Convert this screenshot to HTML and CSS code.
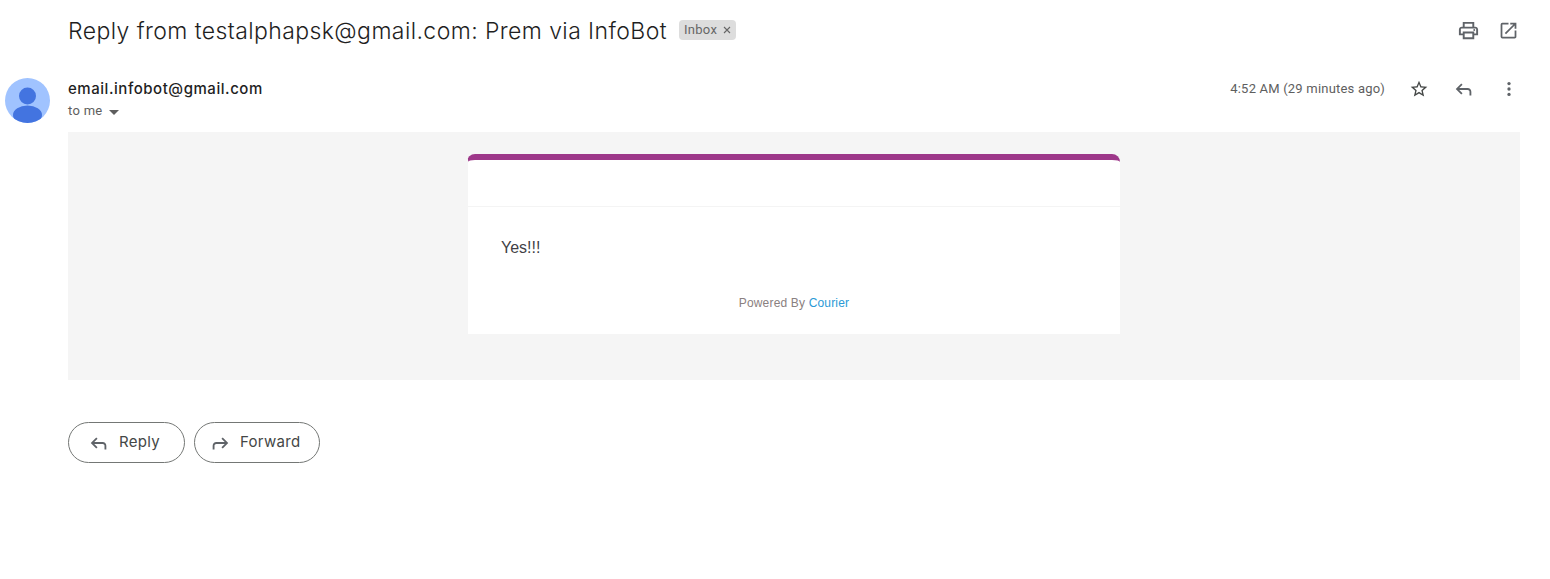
FILE: index.html
```html
<!DOCTYPE html>
<html lang="en">
<head>
<meta charset="utf-8">
<title>Reply from testalphapsk@gmail.com</title>
<link rel="stylesheet" href="styles.css">
</head>
<body>
<main class="page">
  <header class="subject-row">
    <div class="subject-left">
      <h1 class="subject">Reply from testalphapsk@gmail.com: Prem via InfoBot</h1>
      <span class="label">Inbox<svg class="label-x" viewBox="0 0 8 8" width="8" height="8"><path d="M1 1l6 6M7 1L1 7" stroke="#666" stroke-width="1.1" fill="none"/></svg></span>
    </div>
    <div class="subject-actions">
      <svg class="icon icon-print" viewBox="0 0 24 24" width="23" height="23"><path fill="#5f6368" d="M19 8h-1V3H6v5H5c-1.66 0-3 1.34-3 3v6h4v4h12v-4h4v-6c0-1.66-1.34-3-3-3zM8 5h8v3H8V5zm8 14H8v-4h8v4zm2-4v-2H6v2H4v-4c0-.55.45-1 1-1h14c.55 0 1 .45 1 1v4h-2z"/><circle fill="#5f6368" cx="18" cy="11.5" r="1"/></svg>
      <svg class="icon icon-open" viewBox="0 0 24 24" width="21" height="21"><path fill="#5f6368" d="M19 19H5V5h7V3H5a2 2 0 0 0-2 2v14a2 2 0 0 0 2 2h14c1.1 0 2-.9 2-2v-7h-2v7zM14 3v2h3.59l-9.83 9.83 1.41 1.41L19 6.41V10h2V3h-7z"/></svg>
    </div>
  </header>

  <section class="sender-row">
    <svg class="avatar" viewBox="0 0 45 45" width="45" height="45">
      <defs><clipPath id="av"><circle cx="22.5" cy="22.5" r="22.5"/></clipPath></defs>
      <circle cx="22.5" cy="22.5" r="22.5" fill="#a0c3ff"/>
      <g clip-path="url(#av)" fill="#4374e0">
        <circle cx="22.5" cy="18" r="8.5"/>
        <ellipse cx="22.5" cy="37" rx="14.5" ry="9.5"/>
      </g>
    </svg>
    <div class="sender-info">
      <div class="sender-name">email.infobot@gmail.com</div>
      <div class="recipient">to me<span class="caret"></span></div>
    </div>
    <div class="meta">
      <span class="time">4:52 AM (29 minutes ago)</span>
      <svg class="icon" viewBox="0 0 24 24" width="20" height="20"><path fill="#444746" d="M22 9.24l-7.19-.62L12 2 9.19 8.63 2 9.24l5.46 4.73L5.82 21 12 17.27 18.18 21l-1.63-7.03L22 9.24zM12 15.4l-3.76 2.27 1-4.28-3.32-2.88 4.38-.38L12 6.1l1.71 4.04 4.38.38-3.32 2.88 1 4.28L12 15.4z"/></svg>
      <svg class="icon icon-reply" viewBox="0 0 24 24" width="22" height="22"><path fill="#5f6368" d="M20 19v-4c0-2.2-1.8-4-4-4H6.83l3.58-3.59L9 6l-6 6 6 6 1.41-1.41L6.83 13H16c1.1 0 2 .9 2 2v4h2z"/></svg>
      <svg class="icon" viewBox="0 0 24 24" width="20" height="20"><circle fill="#5f6368" cx="12" cy="5.5" r="2"/><circle fill="#5f6368" cx="12" cy="12" r="2"/><circle fill="#5f6368" cx="12" cy="18.5" r="2"/></svg>
    </div>
  </section>

  <section class="mail-body">
    <article class="card">
      <div class="card-head"></div>
      <div class="card-content">Yes!!!</div>
      <div class="card-foot">Powered By <a class="courier" href="#">Courier</a></div>
    </article>
  </section>

  <div class="actions">
    <button class="pill pill-reply" type="button">
      <svg class="pill-icon" viewBox="0 0 24 24" width="22" height="22"><path fill="#5f6368" d="M20 19v-4c0-2.2-1.8-4-4-4H6.83l3.58-3.59L9 6l-6 6 6 6 1.41-1.41L6.83 13H16c1.1 0 2 .9 2 2v4h2z"/></svg>
      <span class="pill-text">Reply</span>
    </button>
    <button class="pill pill-forward" type="button">
      <svg class="pill-icon" viewBox="0 0 24 24" width="22" height="22"><path fill="#5f6368" d="M4 19v-4c0-2.2 1.8-4 4-4h9.17l-3.58-3.59L15 6l6 6-6 6-1.41-1.41L17.17 13H8c-1.1 0-2 .9-2 2v4H4z"/></svg>
      <span class="pill-text">Forward</span>
    </button>
  </div>
</main>
</body>
</html>
```

FILE: styles.css
```css
* { box-sizing: border-box; }
html, body { margin: 0; background: #fff; }
body { font-family: Inter, "Noto Sans", sans-serif; color: #1f1f1f; }
.page { width: 1550px; height: 579px; overflow: hidden; display: flex; flex-direction: column; }
.subject-row { height: 62px; padding: 0 31px 1px 68px; display: flex; align-items: center; justify-content: space-between; }
.subject-left { display: flex; align-items: center; gap: 12px; }
.subject { margin: 0; font-family: Inter, sans-serif; font-size: 23px; font-weight: 300; line-height: 28px; letter-spacing: .41px; color: #1f1f1f; white-space: nowrap; }
.label { display: inline-flex; align-items: center; gap: 6px; height: 20px; margin-bottom: 2px; padding: 0 5px; background: #dddddd; border-radius: 4px; font-family: Roboto, sans-serif; font-size: 13px; letter-spacing: .3px; color: #666; }
.label-x { display: block; }
.subject-actions { display: flex; align-items: center; gap: 18px; }
.icon { display: block; flex: none; }
.sender-row { height: 70px; padding: 16px 31px 0 5px; display: flex; align-items: flex-start; }
.avatar { display: block; flex: none; }
.sender-info { margin-left: 18px; padding-top: 1px; flex: 1; }
.sender-name { font-family: Inter, sans-serif; font-size: 15px; font-weight: 500; line-height: 20px; color: #1f1f1f; letter-spacing: .54px; }
.recipient { margin-top: 2px; display: flex; align-items: center; font-family: Roboto, sans-serif; font-size: 13px; line-height: 20px; letter-spacing: .3px; color: #5e5e5e; }
.caret { margin-left: 6px; margin-top: 2px; border: 5px solid transparent; border-top-color: #5e5e5e; border-bottom-width: 0; }
.meta { display: flex; align-items: center; height: 22px; gap: 24px; }
.time { font-family: Roboto, sans-serif; font-size: 13px; letter-spacing: .2px; color: #5e5e5e; position: relative; top: -1px; }
.mail-body { margin: 0 30px 0 68px; height: 248px; background: #f5f5f5; padding-top: 22px; display: flex; justify-content: center; flex: none; }
.card { width: 653px; height: 180px; margin-right: 1px; background: #fff; border-top: 6px solid #9d3789; border-left: 1px solid #f5f5f5; border-radius: 8px 8px 0 0; font-family: "Liberation Sans", Arial, sans-serif; }
.card-head { height: 47px; border-bottom: 1px solid #f4f4f4; }
.card-content { padding: 30px 33px 0; font-size: 16px; line-height: 22px; color: #3f3f46; height: 88px; }
.card-foot { text-align: center; font-size: 12px; line-height: 16px; letter-spacing: .17px; color: #8a8080; }
.courier { color: #2a9ad6; text-decoration: none; }
.actions { display: flex; gap: 9px; padding: 42px 0 0 68px; }
.pill { display: inline-flex; align-items: center; height: 41px; background: #fff; border: 1px solid #747775; border-radius: 21px; font-family: Inter, sans-serif; font-size: 15px; letter-spacing: .3px; color: #444746; padding: 0; }
.pill-reply { width: 117px; padding-left: 19px; gap: 9px; }
.pill-forward { width: 126px; padding-left: 14px; gap: 9px; }
.pill-text { position: relative; top: -1px; }
.pill-icon { display: block; flex: none; }
```
